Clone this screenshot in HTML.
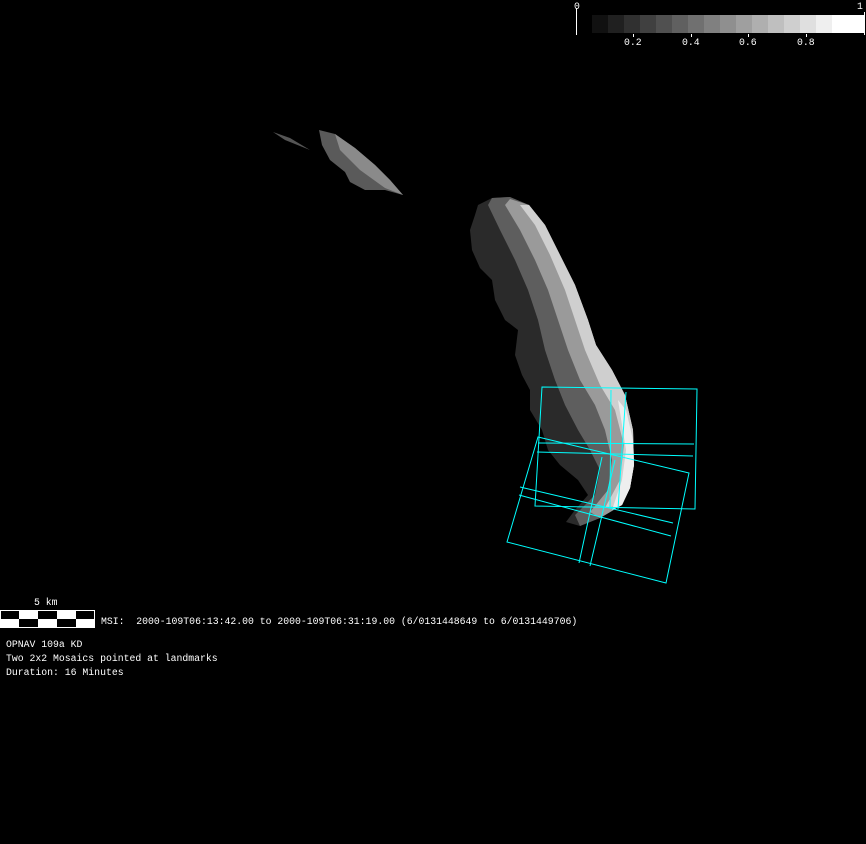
<!DOCTYPE html>
<html><head><style>
html,body{margin:0;padding:0;background:#000;width:866px;height:844px;overflow:hidden}
.t{position:absolute;color:#fff;font-family:"Liberation Mono",monospace;font-size:9.8px;white-space:pre;line-height:12px}
</style></head><body>
<svg width="866" height="844" style="position:absolute;left:0;top:0">
<!-- colorbar -->
<line x1="576.5" y1="8" x2="576.5" y2="35" stroke="#fff"/>
<g>
<rect x="592" y="15" width="17" height="18" fill="#111"/>
<rect x="608" y="15" width="17" height="18" fill="#202020"/>
<rect x="624" y="15" width="17" height="18" fill="#303030"/>
<rect x="640" y="15" width="17" height="18" fill="#404040"/>
<rect x="656" y="15" width="17" height="18" fill="#505050"/>
<rect x="672" y="15" width="17" height="18" fill="#606060"/>
<rect x="688" y="15" width="17" height="18" fill="#707070"/>
<rect x="704" y="15" width="17" height="18" fill="#808080"/>
<rect x="720" y="15" width="17" height="18" fill="#8f8f8f"/>
<rect x="736" y="15" width="17" height="18" fill="#9f9f9f"/>
<rect x="752" y="15" width="17" height="18" fill="#afafaf"/>
<rect x="768" y="15" width="17" height="18" fill="#bfbfbf"/>
<rect x="784" y="15" width="17" height="18" fill="#cfcfcf"/>
<rect x="800" y="15" width="17" height="18" fill="#dfdfdf"/>
<rect x="816" y="15" width="17" height="18" fill="#efefef"/>
<rect x="832" y="15" width="32" height="18" fill="#fff"/>
</g>
<line x1="864.5" y1="12" x2="864.5" y2="35" stroke="#fff"/>
<g stroke="#fff"><line x1="633.5" y1="34" x2="633.5" y2="37"/><line x1="691.5" y1="34" x2="691.5" y2="37"/><line x1="748.5" y1="34" x2="748.5" y2="37"/><line x1="806.5" y1="34" x2="806.5" y2="37"/></g>
<!-- fragment -->
<path d="M273,132 L290,138 L310,150 L300,146 L285,140Z" fill="#555"/>
<path d="M319,130 L335,134 L355,148 L375,165 L390,180 L403,195 L385,190 L365,190 L350,182 L345,172 L330,160 L322,145Z" fill="#5a5a5a"/>
<path d="M335,134 L355,148 L375,165 L390,180 L403,195 L385,188 L360,170 L340,150Z" fill="#8a8a8a"/>
<!-- asteroid -->
<path d="M478,205 L492,198 L510,197 L529,205 L545,225 L560,255 L575,285 L588,320 L596,345 L612,370 L625,395 L633,430 L634,465 L630,488 L622,505 L600,518 L580,526 L566,522 L575,510 L588,495 L578,480 L560,465 L548,450 L542,430 L530,410 L530,390 L522,375 L515,355 L518,330 L505,320 L495,300 L492,280 L480,268 L472,250 L470,230 L475,215Z" fill="#2a2a2a"/>
<path d="M488,205 L500,230 L515,260 L528,290 L538,320 L545,350 L555,380 L565,405 L578,430 L590,450 L600,470 L595,495 L575,515 L580,526 L600,518 L622,505 L630,488 L634,465 L633,430 L625,395 L612,370 L596,345 L588,320 L575,285 L560,255 L545,225 L529,205 L510,197 L492,198Z" fill="#5e5e5e"/>
<path d="M505,205 L520,230 L535,260 L548,290 L558,320 L568,350 L580,380 L595,405 L605,430 L612,460 L608,490 L590,512 L600,518 L622,505 L630,488 L634,465 L633,430 L625,395 L612,370 L596,345 L588,320 L575,285 L560,255 L545,225 L529,205 L510,199Z" fill="#9a9a9a"/>
<path d="M520,205 L535,225 L550,255 L565,290 L575,320 L585,350 L600,385 L615,410 L624,445 L620,480 L605,508 L622,505 L630,488 L634,465 L633,430 L625,395 L612,370 L596,345 L588,320 L575,285 L560,255 L545,225 L529,205Z" fill="#cfcfcf"/>
<path d="M618,400 L626,410 L633,440 L634,465 L630,488 L622,505 L612,510 L622,480 L626,450 Z" fill="#eeeeee"/>
<!-- cyan frames -->
<g stroke="#00ffff" stroke-width="1" fill="none">
<path d="M542,387 L697,389 L695,509 L535,506Z"/>
<path d="M611,390 L610,508 M626,392 L618,509 M538,443 L694,444 M537,452 L693,456"/>
<path d="M538,437 L689,473 L666,583 L507,542Z"/>
<path d="M520,487 L673,523 M519,495 L671,536 M602,457 L579,563 M615,460 L590,566"/>
</g>
<!-- scale bar -->
<rect x="0.5" y="610.5" width="94" height="17" fill="#fff" stroke="#fff"/>
<g fill="#000">
<rect x="1" y="611" width="18" height="8"/><rect x="38" y="611" width="19" height="8"/><rect x="76" y="611" width="18" height="8"/>
<rect x="19" y="619" width="19" height="8"/><rect x="57" y="619" width="19" height="8"/>
</g>
</svg>
<div class="t" style="left:574px;top:1px">0</div>
<div class="t" style="left:857px;top:1px">1</div>
<div class="t" style="left:624px;top:37px">0.2</div>
<div class="t" style="left:682px;top:37px">0.4</div>
<div class="t" style="left:739px;top:37px">0.6</div>
<div class="t" style="left:797px;top:37px">0.8</div>
<div class="t" style="left:34px;top:597px">5 km</div>
<div class="t" style="left:101px;top:616px">MSI:  2000-109T06:13:42.00 to 2000-109T06:31:19.00 (6/0131448649 to 6/0131449706)</div>
<div class="t" style="left:6px;top:639px">OPNAV 109a KD</div>
<div class="t" style="left:6px;top:653px">Two 2x2 Mosaics pointed at landmarks</div>
<div class="t" style="left:6px;top:667px">Duration: 16 Minutes</div>
</body></html>
